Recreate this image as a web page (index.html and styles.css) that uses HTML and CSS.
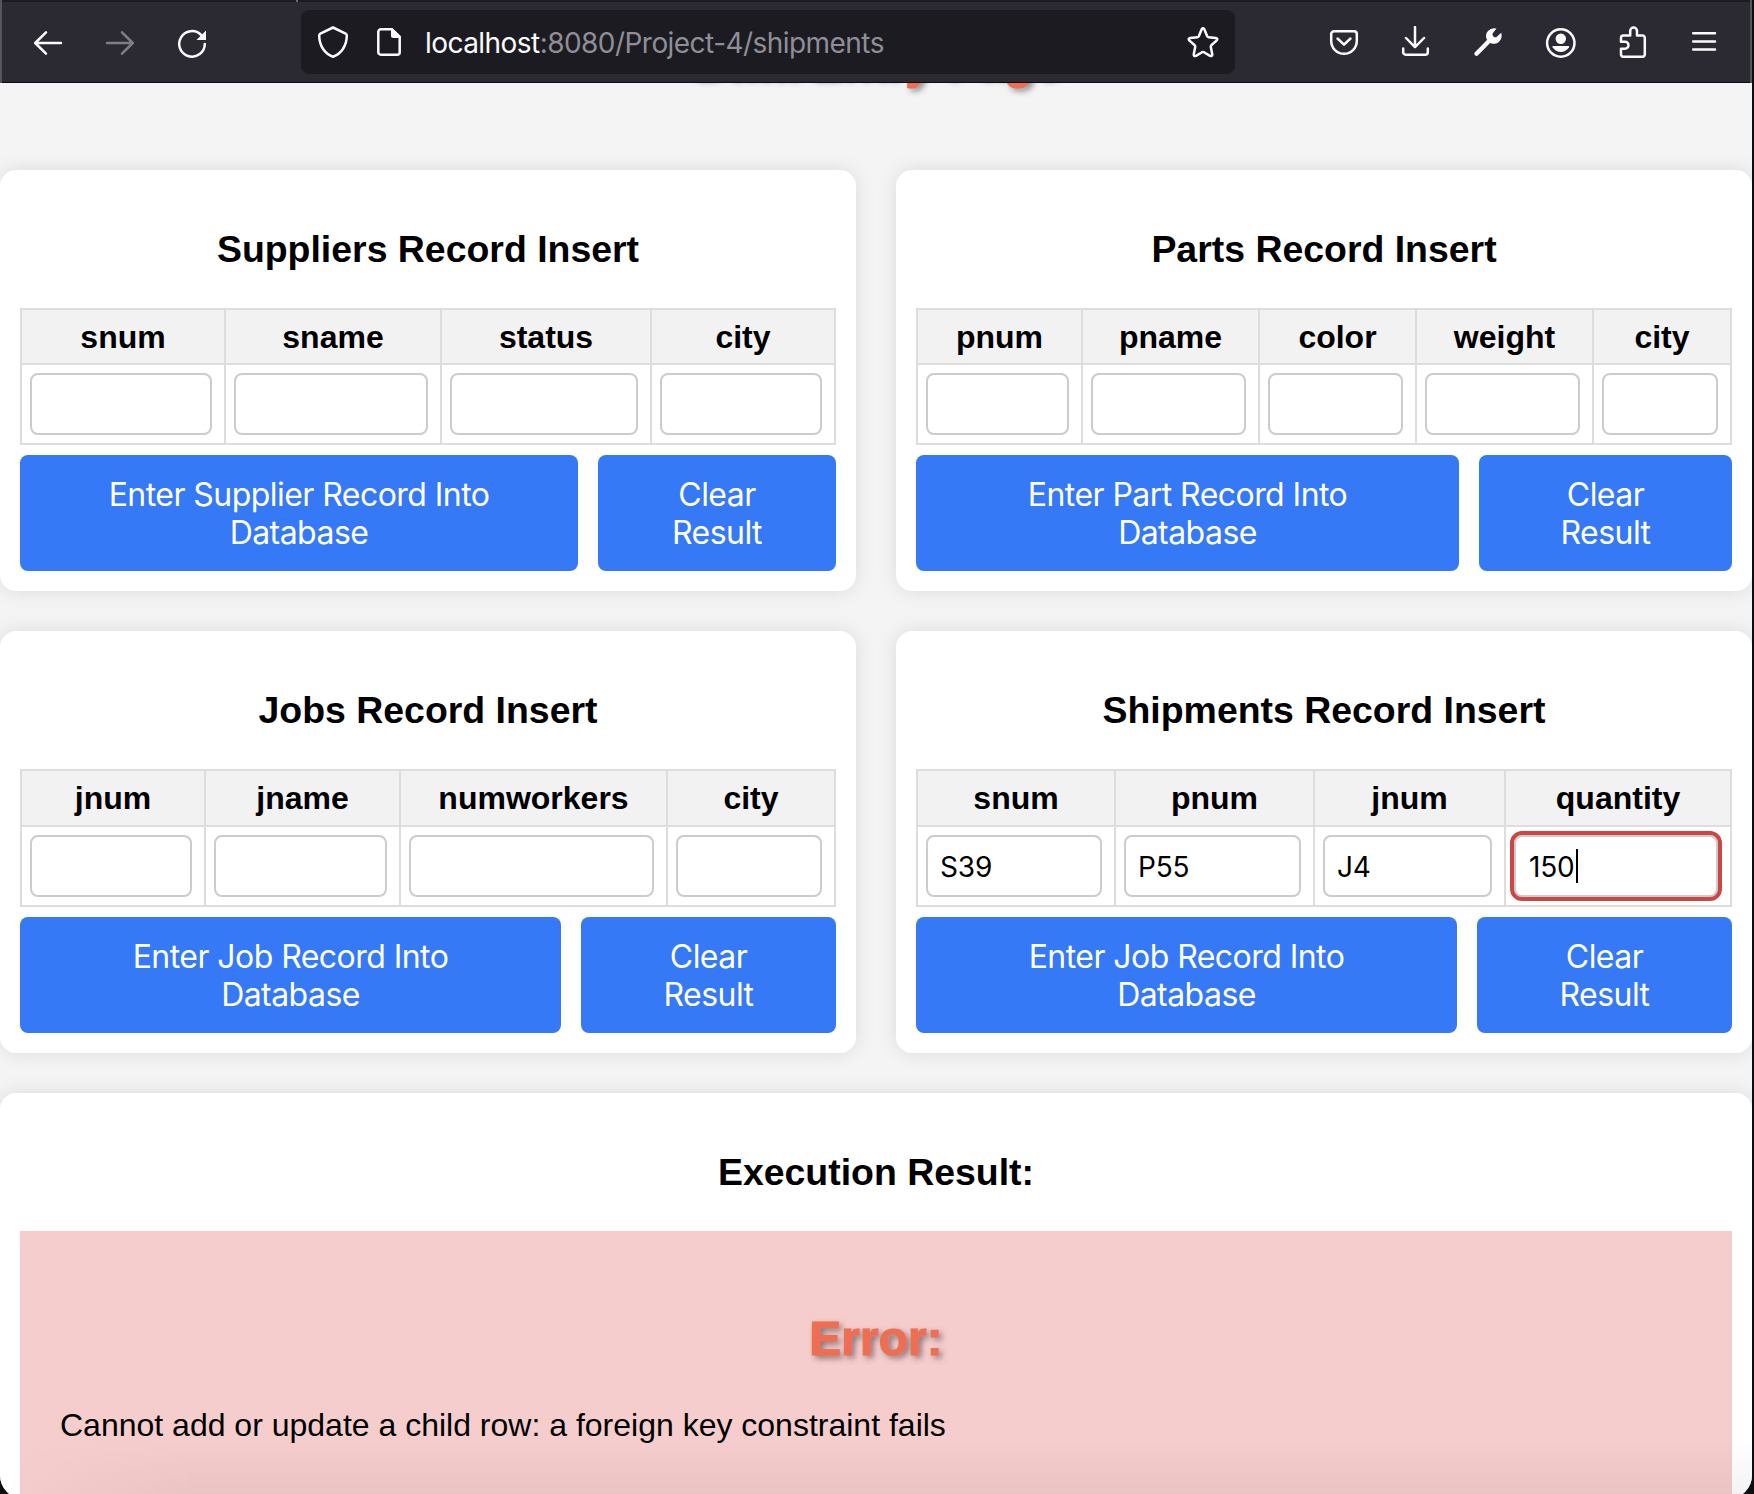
FILE: index.html
```html
<!DOCTYPE html>
<html lang="en">
<head>
<meta charset="utf-8">
<title>Data Entry Page</title>
<link rel="stylesheet" href="styles.css">
</head>
<body>
<div class="window">
  <header class="toolbar">
    <div class="nav">
      <svg class="icon" viewBox="0 0 32 32"><path d="M3.5 17H29M14 6.3L3.2 17L14 27.7"/></svg>
      <svg class="icon dim" viewBox="0 0 32 32"><path d="M3 17H28.500M18 6.300L28.800 17L18 27.700"/></svg>
      <svg class="icon" viewBox="0 0 32 32"><path d="M28.800 18A12.800 12.800 0 1 1 25 8.800"/><path class="solid" d="M30 4.500V14H20.500Z"/></svg>
    </div>
    <div class="urlbar">
      <svg class="icon" viewBox="0 0 32 32"><path d="M16 1.500L28.600 7.600Q29.800 8.200 29.800 9.500C29.800 20 24 28 16 30.700C8 28 2.200 20 2.200 9.500Q2.200 8.200 3.400 7.600Z"/></svg>
      <svg class="icon page" viewBox="0 0 32 32"><path d="M7.500 3.300H19L26.700 11V26.200A2.500 2.500 0 0 1 24.200 28.700H7.800A2.500 2.500 0 0 1 5.300 26.200V5.800A2.500 2.500 0 0 1 7.800 3.300Z"/><path class="solid" d="M18 2.200H19.500L27.900 10.600V12H20A2 2 0 0 1 18 10Z"/></svg>
      <span class="url"><b class="host">localhost</b>:8080/Project-4/shipments</span>
      <svg class="icon" viewBox="0 0 32 32"><path d="M14.700 3.200Q16 1.300 17.300 3.200L20.200 10.300Q20.600 11.100 21.500 11.200L28.900 12Q31.200 12.600 29.800 14.400L24.300 19.300Q23.600 20 23.800 20.900L25.300 28.500Q25.200 30.700 23.100 29.900L16.900 26.200Q16 25.700 15.100 26.200L8.900 29.900Q6.800 30.700 6.700 28.500L8.200 20.900Q8.400 20 7.700 19.300L2.200 14.400Q0.800 12.600 3.100 12L10.500 11.200Q11.400 11.100 11.800 10.300Z"/></svg>
    </div>
    <div class="tools">
      <svg class="icon" viewBox="0 0 32 32"><path d="M6 5.300H26A2.800 2.800 0 0 1 28.800 8.100V15A12.800 12.800 0 0 1 3.200 15V8.100A2.800 2.800 0 0 1 6 5.300Z"/><path d="M9.500 12.500L16 18.700L22.500 12.500"/></svg>
      <svg class="icon" viewBox="0 0 32 32"><path d="M15 1V21M6 12L15 21.200L24 12M3.200 22.500V26.200A2.500 2.500 0 0 0 5.700 28.700H25.300A2.500 2.500 0 0 0 27.800 26.200V22.500"/></svg>
      <svg class="icon" viewBox="0 0 32 32"><path class="handle" d="M4.500 27.700L19 13"/><path class="solid" d="M24.500 2.600L20.600 7.600Q20.300 8.300 20.700 9.300Q21.200 10.900 22.800 11.300Q23.800 11.500 24.500 11L29.200 6.800Q31 12.500 26.500 16.300Q23 18.800 18.800 17.200L14.600 13Q12.900 8.500 16 4.900Q19.400 1.300 24.500 2.600Z"/></svg>
      <svg class="icon" viewBox="0 0 32 32"><circle cx="16.800" cy="17" r="13.700"/><circle class="solid" cx="16.800" cy="12.800" r="5.200"/><path class="solid" d="M9.300 20H24.300Q25.600 20 25 21.200Q22 26 16.800 26Q11.600 26 8.600 21.200Q8 20 9.300 20Z"/></svg>
      <svg class="icon" viewBox="0 0 32 32"><path d="M7.300 9.500H14.200V5A3.400 3.400 0 0 1 21 5V9.500H26.500A2.300 2.300 0 0 1 28.800 11.800V28.500A2.300 2.300 0 0 1 26.500 30.800H7.300A2.300 2.300 0 0 1 5 28.500V22.700H9A3.400 3.400 0 0 0 9 15.700H5V11.800A2.300 2.300 0 0 1 7.300 9.500Z"/></svg>
      <svg class="icon" viewBox="0 0 32 32"><path d="M5.200 7.200H27M5.200 15.400H27M5.200 23.500H27"/></svg>
    </div>
  </header>

  <main class="content">
    <h1 class="banner">Data Entry Page</h1>
    <div class="cards">
      <section class="card">
        <h3>Suppliers Record Insert</h3>
        <table class="record">
          <colgroup><col style="width:206px"><col style="width:216px"><col style="width:210px"><col style="width:184px"></colgroup>
          <tr><th>snum</th><th>sname</th><th>status</th><th>city</th></tr>
          <tr><td><input></td><td><input></td><td><input></td><td><input></td></tr>
        </table>
        <div class="actions suppliers"><button>Enter Supplier Record Into<br>Database</button><button>Clear<br>Result</button></div>
      </section>
      <section class="card">
        <h3>Parts Record Insert</h3>
        <table class="record">
          <colgroup><col style="width:167px"><col style="width:177px"><col style="width:157px"><col style="width:177px"><col style="width:138px"></colgroup>
          <tr><th>pnum</th><th>pname</th><th>color</th><th>weight</th><th>city</th></tr>
          <tr><td><input></td><td><input></td><td><input></td><td><input></td><td><input></td></tr>
        </table>
        <div class="actions parts"><button>Enter Part Record Into<br>Database</button><button>Clear<br>Result</button></div>
      </section>
      <section class="card tall">
        <h3>Jobs Record Insert</h3>
        <table class="record">
          <colgroup><col style="width:186px"><col style="width:195px"><col style="width:267px"><col style="width:168px"></colgroup>
          <tr><th>jnum</th><th>jname</th><th>numworkers</th><th>city</th></tr>
          <tr><td><input></td><td><input></td><td><input></td><td><input></td></tr>
        </table>
        <div class="actions"><button>Enter Job Record Into<br>Database</button><button>Clear<br>Result</button></div>
      </section>
      <section class="card tall">
        <h3>Shipments Record Insert</h3>
        <table class="record">
          <colgroup><col style="width:200px"><col style="width:199px"><col style="width:191px"><col style="width:226px"></colgroup>
          <tr><th>snum</th><th>pnum</th><th>jnum</th><th>quantity</th></tr>
          <tr><td><input value="S39"></td><td><input value="P55"></td><td><input value="J4"></td><td class="active"><input value="150"><span class="caret"></span></td></tr>
        </table>
        <div class="actions"><button>Enter Job Record Into<br>Database</button><button>Clear<br>Result</button></div>
      </section>
      <section class="card result">
        <h3>Execution Result:</h3>
        <div class="error">
          <h2>Error:</h2>
          <p>Cannot add or update a child row: a foreign key constraint fails</p>
        </div>
      </section>
    </div>
  </main>
  <div class="shade"></div>
</div>
</body>
</html>
```
FILE: styles.css
```css
* { box-sizing: border-box; }

body {
  margin: 0;
  height: 1494px;
  overflow: hidden;
  background: #0b0d0f;
  font-family: "Liberation Sans", Arial, sans-serif;
  font-size: 32px;
  color: #000;
}

.window {
  position: relative;
  display: flex;
  flex-direction: column;
  width: 1752px;
  height: 1499px;
  overflow: hidden;
  border-radius: 0 0 24px 24px;
  background: #f4f4f4;
}

/* Browser toolbar */
.toolbar {
  flex: none;
  display: flex;
  align-items: center;
  height: 83px;
  padding: 0 30px;
  border: solid #56555c;
  border-width: 0 2px;
  background:
    linear-gradient(#6b6a70, #6b6a70) 294px 0 / 2px 2px no-repeat,
    linear-gradient(#1c1b22 2px, #2b2a33 2px, #2b2a33 82px, #0c0c0e 82px);
}

.nav, .tools { display: flex; gap: 40px; }

.icon {
  flex: none;
  display: block;
  width: 32px;
  height: 32px;
  fill: none;
  stroke: #fbfbfe;
  stroke-width: 2.5;
  stroke-linecap: round;
  stroke-linejoin: round;
}
.icon .solid { fill: #fbfbfe; stroke: none; }
.icon .handle { stroke-width: 4.4; }
.dim { opacity: .4; }

.urlbar {
  flex: none;
  display: flex;
  align-items: center;
  width: 934px;
  height: 64px;
  margin: 1px 93px 0;
  padding: 0 16px;
  border-radius: 8px;
  background: #1c1b22;
}
.page { margin-left: 24px; }
.url {
  flex: 1;
  margin-left: 20px;
  padding-top: 2px;
  font: 28px/36px Inter, sans-serif;
  letter-spacing: -.55px;
  color: #8f8e96;
  white-space: nowrap;
}
.host { font-weight: 400; color: #fbfbfe; }

/* Page, scrolled so that the banner is mostly out of view */
.content { flex: 1; min-height: 0; overflow: hidden; }

h1, h2 {
  font-size: 48px;
  line-height: 56px;
  color: #ed6e53;
  text-align: center;
  -webkit-text-stroke: 1px #ed6e53;
  text-shadow: 3px 3px 6px rgba(0, 0, 0, .5);
}
.banner { margin: -49px 0 80px; }

.cards {
  display: grid;
  grid-template-columns: 856px 856px;
  gap: 40px;
}

.card {
  padding: 20px;
  border-radius: 16px;
  background: #fff;
  box-shadow: 0 0 20px rgba(0, 0, 0, .1);
}

h3 {
  margin: 0;
  padding: 37.500px 0;
  font-size: 37.440px;
  line-height: 43px;
  text-align: center;
}

.record {
  width: 816px;
  table-layout: fixed;
  border-collapse: separate;
  border-spacing: 0;
}
.record th, .record td {
  padding: 0;
  border: solid #ddd;
  border-width: 0 2px 2px 0;
}
.record th { height: 57px; padding-top: 1px; border-top-width: 2px; background: #f2f2f2; line-height: 37px; }
.tall th { height: 58px; padding-top: 0; }
.record td { height: 80px; }
.record th:first-child, .record td:first-child { border-left-width: 2px; }

.record input {
  display: block;
  width: calc(100% - 20px);
  height: 62px;
  margin: 0 12px 0 8px;
  padding: 2px 12px 0;
  border: 2px solid #ccc;
  border-radius: 8px;
  background: #fff;
  font: 28px Inter, sans-serif;
  letter-spacing: -.15px;
  color: #000;
}
.active { position: relative; }
.record .active input { padding-left: 13px; outline: 4px solid #cd4646; }
.caret {
  position: absolute;
  left: 70px;
  top: 22px;
  width: 2px;
  height: 34px;
  background: #000;
}

.actions {
  display: grid;
  grid-template-columns: 541px 1fr;
  gap: 20px;
  margin-top: 10px;
}
.suppliers { grid-template-columns: 558px 1fr; }
.parts { grid-template-columns: 543px 1fr; }

button {
  height: 116px;
  padding: 1px 0 0;
  border: 0;
  border-radius: 8px;
  background: #3579f6;
  font: 32px/38px Inter, sans-serif;
  letter-spacing: -.55px;
  color: #fff;
}

.result { grid-column: 1 / -1; height: 460px; }
.error { height: 320px; padding: 40px; background: #f6cdcd; }
.error h2 { margin: 40px 0; }
.error p { margin: 0; line-height: 37px; }

/* Soft darkening along the lower edge of the window */
.shade {
  position: absolute;
  inset: 1440px 0 0 0;
  background: linear-gradient(rgba(0, 0, 0, 0), rgba(0, 0, 0, .05));
  -webkit-mask-image: linear-gradient(90deg, transparent, #000 200px);
  mask-image: linear-gradient(90deg, transparent, #000 200px);
}
```
